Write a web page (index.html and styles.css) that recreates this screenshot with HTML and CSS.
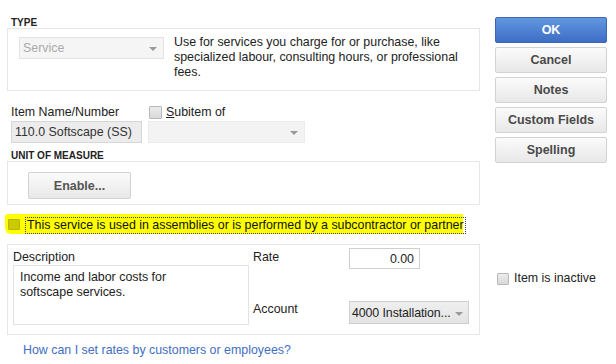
FILE: index.html
```html
<!DOCTYPE html>
<html>
<head>
	<title>New Item</title>
	<meta name="viewport" content="width=device-width, initial-scale=1.0">
	<link rel="stylesheet" href="styles.css">
</head>
<body>
  <div class="dialog">
    <div class="left">
      <div class="group-label type-label">TYPE</div>
      <div class="box type-box">
        <div class="select disabled service">
          <span>Service</span>
          <span class="arrow"></span>
        </div>
        <div class="type-desc">
          Use for services you charge for or purchase, like specialized labour, consulting hours, or professional fees.
        </div>
      </div>

      <div class="name-row">
        <div class="name-col">
          <div class="field-label">Item Name/Number</div>
          <div class="input name-input">110.0 Softscape (SS)</div>
        </div>
        <div class="sub-col">
          <div class="field-label"><span class="check"></span> <u>S</u>ubitem of</div>
          <div class="select disabled subitem">
            <span></span>
            <span class="arrow"></span>
          </div>
        </div>
      </div>

      <div class="group-label uom-label">UNIT OF MEASURE</div>
      <div class="box uom-box">
        <button class="btn enable">Enable...</button>
      </div>

      <div class="assembly-row">
        <span class="check yellow"></span>
        <span class="focus-text">This service is used in assemblies or is performed by a subcontractor or partner</span>
      </div>

      <div class="box detail-box">
        <div class="desc-col">
          <div class="field-label">Description</div>
          <div class="textarea">Income and labor costs for<br>softscape services.</div>
        </div>
        <div class="rate-col">
          <div class="rate-label">Rate</div>
          <div class="input rate-input">0.00</div>
          <div class="account-label">Account</div>
          <div class="select account">
            <span>4000 Installation...</span>
            <span class="arrow"></span>
          </div>
        </div>
      </div>

      <a class="help-link" href="#">How can I set rates by customers or employees?</a>
    </div>

    <div class="right">
      <button class="btn side primary">OK</button>
      <button class="btn side">Cancel</button>
      <button class="btn side">Notes</button>
      <button class="btn side">Custom Fields</button>
      <button class="btn side">Spelling</button>

      <div class="inactive">
        <span class="check"></span>
        <span>Item is inactive</span>
      </div>
    </div>
  </div>
</body>
</html>
```

FILE: styles.css
```css
* {
	box-sizing: border-box;
}
body {
	margin: 0;
	background: white;
	font-family: "Liberation Sans", Arial, sans-serif;
	font-size: 12.4px;
	color: #222;
}
.dialog {
	display: flex;
}
.left {
	width: 473px;
	margin-left: 7px;
}
.right {
	width: 112px;
	margin-left: 15px;
	padding-top: 17px;
	display: flex;
	flex-direction: column;
}

/* group headings + boxes */
.group-label {
	font-size: 10px;
	font-weight: bold;
	line-height: 10px;
	padding-left: 4px;
	color: #222;
}
.type-label {
	margin-top: 18px;
}
.box {
	border: 1px solid #e6e6e6;
}
.type-box {
	display: flex;
	height: 63px;
	padding: 8px 0 0 11px;
}
.type-desc {
	margin-left: 10px;
	margin-top: -2px;
	width: 292px;
	line-height: 15px;
}

/* selects / inputs */
.select {
	position: relative;
	height: 22px;
	line-height: 20px;
	padding-left: 3px;
	border: 1px solid #e3e3e3;
	background: #f5f5f5;
}
.select.disabled {
	color: #aaa;
}
.service {
	width: 145px;
}
.arrow {
	position: absolute;
	right: 6px;
	top: 9px;
	border-left: 4px solid transparent;
	border-right: 4px solid transparent;
	border-top: 4px solid #999;
}
.input {
	height: 22px;
	line-height: 20px;
	padding: 0 4px;
	border: 1px solid #d0d0d0;
}

.name-row {
	display: flex;
	margin-top: 13px;
	padding-left: 4px;
}
.name-col {
	width: 137px;
}
.field-label {
	line-height: 15px;
	height: 17px;
	display: flex;
	align-items: center;
}
.field-label u {
	text-decoration: underline;
}
.name-input {
	width: 131px;
	padding: 0 3px;
	background: #ececec;
	border-color: #d6d6d6;
	color: #333;
	white-space: nowrap;
}
.sub-col .field-label {
	padding-left: 1px;
}
.subitem {
	width: 157px;
	background: #f3f3f3;
	border-color: #ececec;
}

.check {
	display: inline-block;
	width: 13px;
	height: 13px;
	border: 1px solid #b9b9b9;
	border-radius: 1px;
	background: linear-gradient(#ececec, #d9d9d9);
	margin-right: 4px;
	flex-shrink: 0;
}

.uom-label {
	margin-top: 8px;
}
.uom-box {
	height: 44px;
	padding: 10px 0 0 20px;
}

/* buttons */
.btn {
	display: block;
	font-family: "Liberation Sans", Arial, sans-serif;
	font-weight: bold;
	font-size: 12.5px;
	color: #4a4a4a;
	background: linear-gradient(#fbfbfb, #e8e8e8);
	border: 1px solid #d2d2d2;
	border-radius: 2px;
	padding: 0;
}
.enable {
	width: 103px;
	height: 27px;
	color: #555;
}
.side {
	width: 112px;
	height: 26px;
	margin-bottom: 4px;
}
.primary {
	color: white;
	background: linear-gradient(#6198e0, #3d6dc6);
	border-color: #3c66b5;
}

/* highlighted checkbox */
.assembly-row {
	display: flex;
	align-items: center;
	margin: 9px 17px 0 -2px;
	height: 20px;
	padding-left: 3px;
	background: #ffff00;
	border-radius: 3px 0 0 6px;
}
.check.yellow {
	width: 12px;
	height: 11px;
	background: #caca00;
	border-color: #b6b600;
	margin-right: 5px;
}
.focus-text {
	border: 1px dotted #444;
	line-height: 15px;
	padding: 0 1px;
	margin-top: 2px;
	color: #111;
	white-space: nowrap;
}

/* details */
.detail-box {
	display: flex;
	margin-top: 10px;
	height: 91px;
	padding: 3px 0 0 5px;
}
.desc-col {
	width: 236px;
}
.desc-col .field-label {
	margin-top: 1px;
}
.textarea {
	height: 60px;
	margin-top: -1px;
	padding: 4px 6px;
	line-height: 15px;
	border: 1px solid #e3e3e3;
}
.rate-col {
	margin-left: 4px;
	display: grid;
	grid-template-columns: 96px 120px;
	grid-template-rows: 21px 32px 23px;
}
.rate-label {
	grid-row: 1;
	line-height: 15px;
	padding-top: 2px;
}
.rate-input {
	grid-row: 1;
	width: 71px;
	height: 21px;
	text-align: right;
	padding-right: 5px;
	border-color: #cfcfcf;
}
.account-label {
	grid-row: 3;
	line-height: 15px;
	padding-top: 1px;
}
.account {
	grid-row: 3;
	width: 120px;
	height: 23px;
	line-height: 22px;
	padding-left: 2px;
	background: linear-gradient(#efefef, #e3e3e3);
	border-color: #cfcfcf;
	color: #222;
	white-space: nowrap;
	letter-spacing: -0.1px;
}
.account .arrow {
	top: 10px;
	right: 5px;
}

.help-link {
	display: block;
	margin: 8px 0 0 16px;
	color: #3f6ec4;
	text-decoration: none;
	line-height: 15px;
}

.inactive {
	display: flex;
	align-items: center;
	margin-top: 104px;
	padding-left: 2px;
	line-height: 15px;
}
.inactive .check {
	width: 12px;
	height: 12px;
	margin-right: 5px;
}
```
